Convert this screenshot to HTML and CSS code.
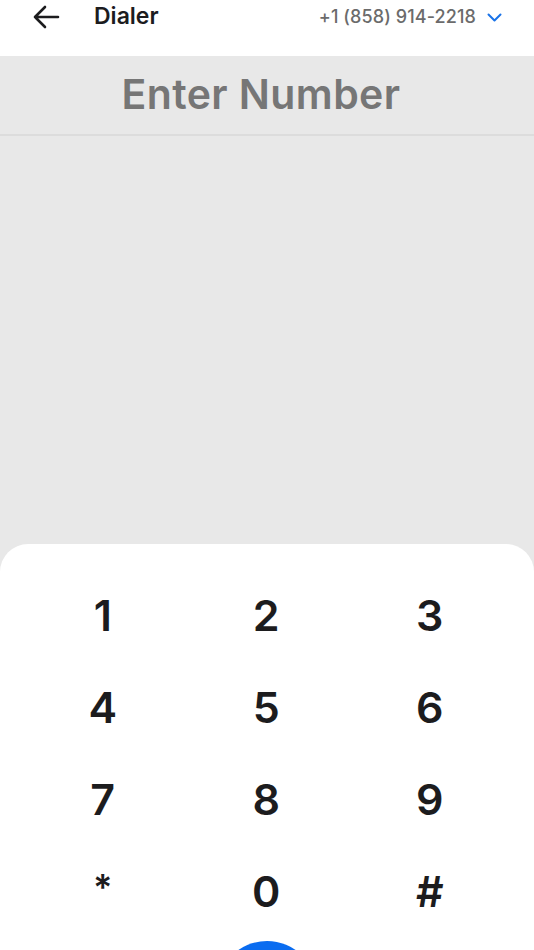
FILE: index.html
```html
<!DOCTYPE html>
<html>
<head>
<meta charset="utf-8">
<link rel="stylesheet" href="styles.css">
</head>
<body>
<div class="app">
  <header class="topbar">
    <div class="back">
      <svg width="28" height="24" viewBox="0 0 28 24"><path d="M26 12H3M13 2L3 12l10 10" fill="none" stroke="#1c1c1e" stroke-width="2.6" stroke-linecap="round" stroke-linejoin="round"/></svg>
    </div>
    <div class="title">Dialer</div>
    <div class="line">
      <span class="num">+1 (858) 914-2218</span>
      <svg class="chev" width="15" height="9" viewBox="0 0 15 9"><path d="M1.5 1.5l6 6 6-6" fill="none" stroke="#1a73e8" stroke-width="2" stroke-linecap="round" stroke-linejoin="round"/></svg>
    </div>
  </header>
  <div class="entry">Enter Number</div>
  <div class="spacer"></div>
  <div class="sheet">
    <div class="pad">
      <div class="key">1</div><div class="key">2</div><div class="key">3</div>
      <div class="key">4</div><div class="key">5</div><div class="key">6</div>
      <div class="key">7</div><div class="key">8</div><div class="key">9</div>
      <div class="key star">*</div><div class="key">0</div><div class="key">#</div>
    </div>
    <div class="callrow"><div class="call"></div></div>
  </div>
</div>
</body>
</html>
```
FILE: styles.css
```css
html, body {
  margin: 0;
  padding: 0;
}
body {
  font-family: Inter, "Noto Sans", sans-serif;
  background: #e8e8e8;
  overflow: hidden;
}
.app {
  width: 534px;
  height: 950px;
  display: flex;
  flex-direction: column;
  overflow: hidden;
}
.topbar {
  height: 56px;
  background: #fff;
  display: flex;
  align-items: flex-start;
  flex-shrink: 0;
}
.back {
  width: 28px;
  height: 24px;
  margin: 5px 0 0 32px;
}
.back svg { display: block; }
.title {
  margin-left: 34px;
  font-size: 23px;
  font-weight: 600;
  color: #1c1c1e;
  line-height: 32px;
  letter-spacing: 0;
}
.line {
  margin-left: auto;
  margin-right: 32px;
  display: flex;
  align-items: center;
  height: 32px;
}
.num {
  font-size: 18px;
  font-weight: 500;
  color: #6b6b6b;
  letter-spacing: 0.1px;
}
.chev {
  margin-left: 11px;
  margin-top: 2px;
}
.entry {
  height: 78px;
  border-bottom: 2px solid #dcdcdc;
  background: #e8e8e8;
  color: #767676;
  font-size: 41px;
  font-weight: 600;
  text-align: center;
  line-height: 76px;
  letter-spacing: 0.4px;
  padding-right: 12px;
  flex-shrink: 0;
}
.spacer {
  height: 408px;
  flex-shrink: 0;
}
.sheet {
  flex: 1;
  background: #fff;
  border-radius: 28px 28px 0 0;
  padding: 25px 22px 0 21px;
}
.pad {
  display: grid;
  grid-template-columns: repeat(3, 163.5px);
  grid-auto-rows: 92px;
}
.key {
  display: flex;
  align-items: center;
  justify-content: center;
  font-size: 43px;
  font-weight: 600;
  color: #1c1c1e;
}
.key.star {
  align-items: flex-start;
  padding-top: 20px;
  box-sizing: border-box;
  font-size: 36px;
}
.callrow {
  display: flex;
  justify-content: center;
  padding-top: 4px;
  margin-left: 1px;
}
.call {
  width: 100px;
  height: 100px;
  border-radius: 50%;
  background: #0a6cf0;
}
```
